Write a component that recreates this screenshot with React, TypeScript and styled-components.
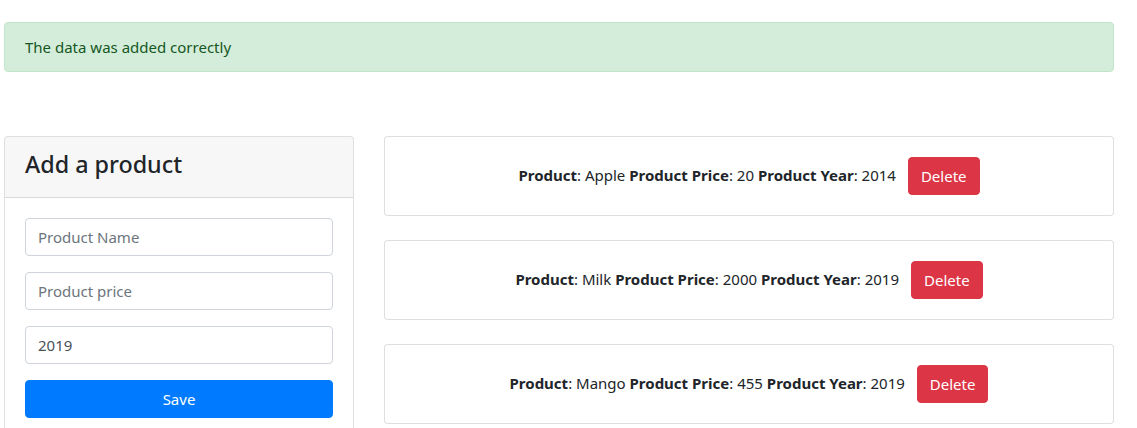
import React from "react";
import styled, { createGlobalStyle } from "styled-components";

const Global = createGlobalStyle`
  * { box-sizing: border-box; }
  body {
    margin: 0;
    background: #fff;
    font-family: "Noto Sans", "Open Sans", sans-serif;
    font-size: 15px;
    line-height: 24px;
    color: #212529;
  }
`;

const Page = styled.div`
  width: 1110px;
  margin-left: 4px;
  padding-top: 22px;
`;

const Alert = styled.div`
  background: #d4edda;
  border: 1px solid #c3e6cb;
  color: #155724;
  border-radius: 4px;
  padding: 12px 20px;
  margin-bottom: 64px;
`;

const Row = styled.div`
  display: grid;
  grid-template-columns: 350px 730px;
  column-gap: 30px;
  align-items: start;
`;

const Card = styled.div`
  border: 1px solid rgba(0, 0, 0, 0.125);
  border-radius: 4px;
  background: #fff;
  overflow: hidden;
`;

const CardHeader = styled.div`
  background: rgba(0, 0, 0, 0.03);
  border-bottom: 1px solid rgba(0, 0, 0, 0.125);
  padding: 14px 20px 0;
  height: 61px;
`;

const Title = styled.h3`
  margin: 0;
  font-size: 23.3px;
  font-weight: 500;
  line-height: 1.2;
`;

const CardBody = styled.div`
  padding: 20px;
`;

const Form = styled.form`
  display: flex;
  flex-direction: column;
  gap: 16px;
`;

const Input = styled.input`
  display: block;
  width: 100%;
  height: 38px;
  padding: 6px 12px;
  font: inherit;
  color: #495057;
  border: 1px solid #ced4da;
  border-radius: 4px;
  &::placeholder { color: #6c757d; }
`;

const Button = styled.button<{ $variant: "primary" | "danger" }>`
  height: 38px;
  padding: 6px 12px;
  font: inherit;
  color: #fff;
  border: 1px solid ${(p) => (p.$variant === "primary" ? "#007bff" : "#dc3545")};
  background: ${(p) => (p.$variant === "primary" ? "#007bff" : "#dc3545")};
  border-radius: 4px;
  cursor: pointer;
`;

const List = styled.div`
  display: flex;
  flex-direction: column;
  gap: 24px;
`;

const ItemBody = styled.div`
  padding: 20px;
  display: flex;
  justify-content: center;
  align-items: center;
  gap: 12px;
`;

const ItemText = styled.span`
  white-space: nowrap;
  margin-top: -2px;
`;

const products = [
  { name: "Apple", price: "20", year: "2014" },
  { name: "Milk", price: "2000", year: "2019" },
  { name: "Mango", price: "455", year: "2019" },
];

export default function App() {
  return (
    <>
      <Global />
      <Page>
        <Alert>The data was added correctly</Alert>
        <Row>
          <Card>
            <CardHeader>
              <Title>Add a product</Title>
            </CardHeader>
            <CardBody>
              <Form onSubmit={(e) => e.preventDefault()}>
                <Input placeholder="Product Name" />
                <Input placeholder="Product price" />
                <Input defaultValue="2019" />
                <Button $variant="primary" type="submit">Save</Button>
              </Form>
            </CardBody>
          </Card>
          <List>
            {products.map((p) => (
              <Card key={p.name}>
                <ItemBody>
                  <ItemText>
                    <b>Product</b>: {p.name} <b>Product Price</b>: {p.price}{" "}
                    <b>Product Year</b>: {p.year}
                  </ItemText>
                  <Button $variant="danger">Delete</Button>
                </ItemBody>
              </Card>
            ))}
          </List>
        </Row>
      </Page>
    </>
  );
}
